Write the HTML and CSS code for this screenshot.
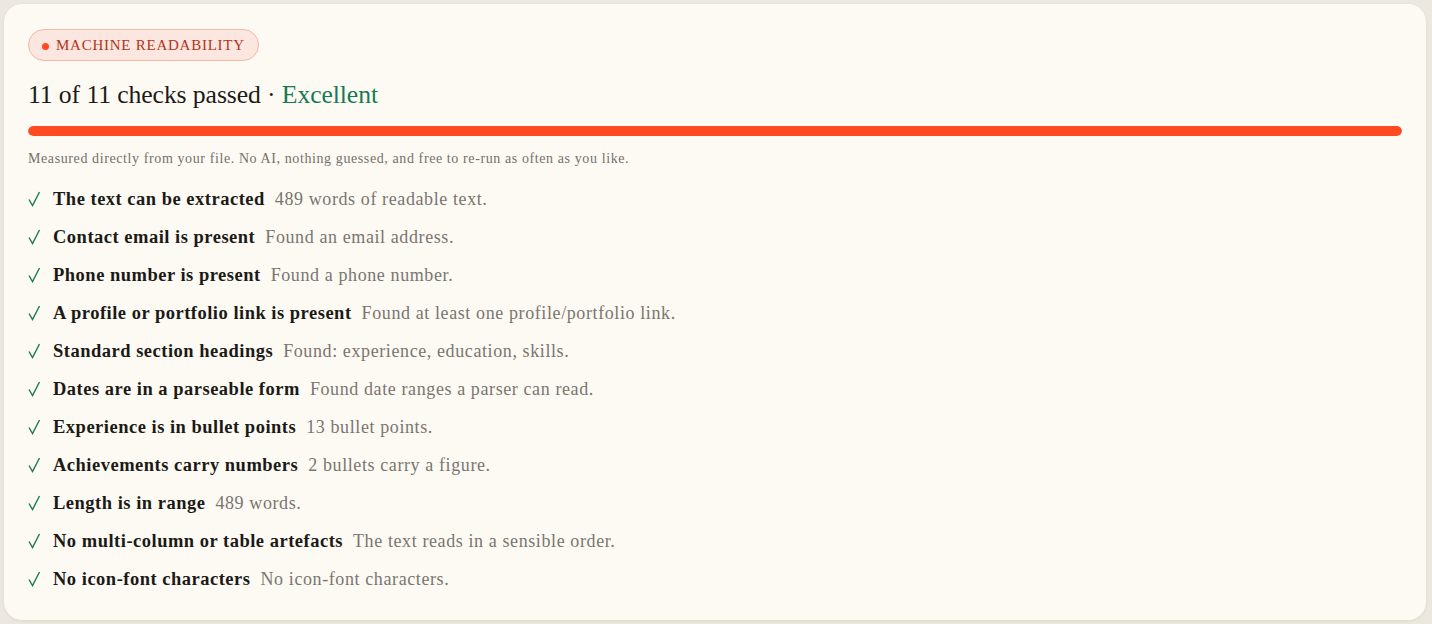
FILE: index.html
```
<!DOCTYPE html>
<html lang="en">
<head>
<meta charset="utf-8">
<link rel="stylesheet" href="styles.css">
</head>
<body>
<section class="card">
  <div class="pill"><span class="dot"></span>MACHINE READABILITY</div>
  <h2 class="title">11 of 11 checks passed · <span class="grade">Excellent</span></h2>
  <div class="bar"><div class="fill" style="width:100%"></div></div>
  <p class="note">Measured directly from your file. No AI, nothing guessed, and free to re-run as often as you like.</p>
  <ul class="checks">
    <li><svg class="tick" viewBox="0 0 12 16"><path d="M1 8.5 L4.5 14.5 L11.5 1"/></svg><b>The text can be extracted</b><span>489 words of readable text.</span></li>
    <li><svg class="tick" viewBox="0 0 12 16"><path d="M1 8.5 L4.5 14.5 L11.5 1"/></svg><b>Contact email is present</b><span>Found an email address.</span></li>
    <li><svg class="tick" viewBox="0 0 12 16"><path d="M1 8.5 L4.5 14.5 L11.5 1"/></svg><b>Phone number is present</b><span>Found a phone number.</span></li>
    <li><svg class="tick" viewBox="0 0 12 16"><path d="M1 8.5 L4.5 14.5 L11.5 1"/></svg><b>A profile or portfolio link is present</b><span>Found at least one profile/portfolio link.</span></li>
    <li><svg class="tick" viewBox="0 0 12 16"><path d="M1 8.5 L4.5 14.5 L11.5 1"/></svg><b>Standard section headings</b><span>Found: experience, education, skills.</span></li>
    <li><svg class="tick" viewBox="0 0 12 16"><path d="M1 8.5 L4.5 14.5 L11.5 1"/></svg><b>Dates are in a parseable form</b><span>Found date ranges a parser can read.</span></li>
    <li><svg class="tick" viewBox="0 0 12 16"><path d="M1 8.5 L4.5 14.5 L11.5 1"/></svg><b>Experience is in bullet points</b><span>13 bullet points.</span></li>
    <li><svg class="tick" viewBox="0 0 12 16"><path d="M1 8.5 L4.5 14.5 L11.5 1"/></svg><b>Achievements carry numbers</b><span>2 bullets carry a figure.</span></li>
    <li><svg class="tick" viewBox="0 0 12 16"><path d="M1 8.5 L4.5 14.5 L11.5 1"/></svg><b>Length is in range</b><span>489 words.</span></li>
    <li><svg class="tick" viewBox="0 0 12 16"><path d="M1 8.5 L4.5 14.5 L11.5 1"/></svg><b>No multi-column or table artefacts</b><span>The text reads in a sensible order.</span></li>
    <li><svg class="tick" viewBox="0 0 12 16"><path d="M1 8.5 L4.5 14.5 L11.5 1"/></svg><b>No icon-font characters</b><span>No icon-font characters.</span></li>
  </ul>
</section>
</body>
</html>
```
FILE: styles.css
```
html, body {
  margin: 0;
  padding: 0;
}
body {
  background: #ece8df;
  font-family: "Liberation Serif", "DejaVu Serif", serif;
  padding: 4px 6px 4px 4px;
}
.card {
  background: #fdfaf4;
  border-radius: 18px;
  box-shadow: 0 1px 3px rgba(120, 100, 70, 0.12);
  padding: 25px 24px 22px 24px;
  height: 616px;
  box-sizing: border-box;
}
.pill {
  display: inline-flex;
  align-items: center;
  gap: 7px;
  height: 32px;
  box-sizing: border-box;
  padding: 0 13px 0 13px;
  border: 1px solid #f0b9a9;
  background: #fbe7df;
  border-radius: 16px;
  color: #b5321b;
  font-size: 15px;
  letter-spacing: 0.75px;
}
.dot {
  width: 7px;
  height: 7px;
  border-radius: 50%;
  background: #ff4a22;
  margin-top: 2px;
}
.title {
  margin: 17px 0 0 0;
  font-weight: 400;
  font-size: 25.7px;
  line-height: 34px;
  color: #1c1a17;
  letter-spacing: -0.1px;
}
.grade {
  color: #167a55;
}
.bar {
  margin-top: 14px;
  height: 10px;
  border-radius: 5px;
  background: #f3ece1;
  overflow: hidden;
}
.fill {
  height: 100%;
  background: #ff4a22;
  border-radius: 5px;
}
.note {
  margin: 15px 0 0 0;
  font-size: 14px;
  line-height: 16px;
  letter-spacing: 0.6px;
  color: #75706a;
}
.checks {
  list-style: none;
  margin: 13px 0 0 0;
  padding: 0;
}
.checks li {
  display: flex;
  align-items: center;
  height: 38px;
  color: #1c1a17;
}
.tick {
  width: 12px;
  height: 16px;
  margin-right: 13px;
  fill: none;
  stroke: #167a55;
  stroke-width: 1.4;
  flex: none;
}
.checks b {
  font-weight: 700;
  font-size: 18.5px;
  letter-spacing: 0.5px;
}
.checks span {
  margin-left: 10px;
  font-size: 18px;
  letter-spacing: 0.6px;
  color: #7a756f;
}
```
